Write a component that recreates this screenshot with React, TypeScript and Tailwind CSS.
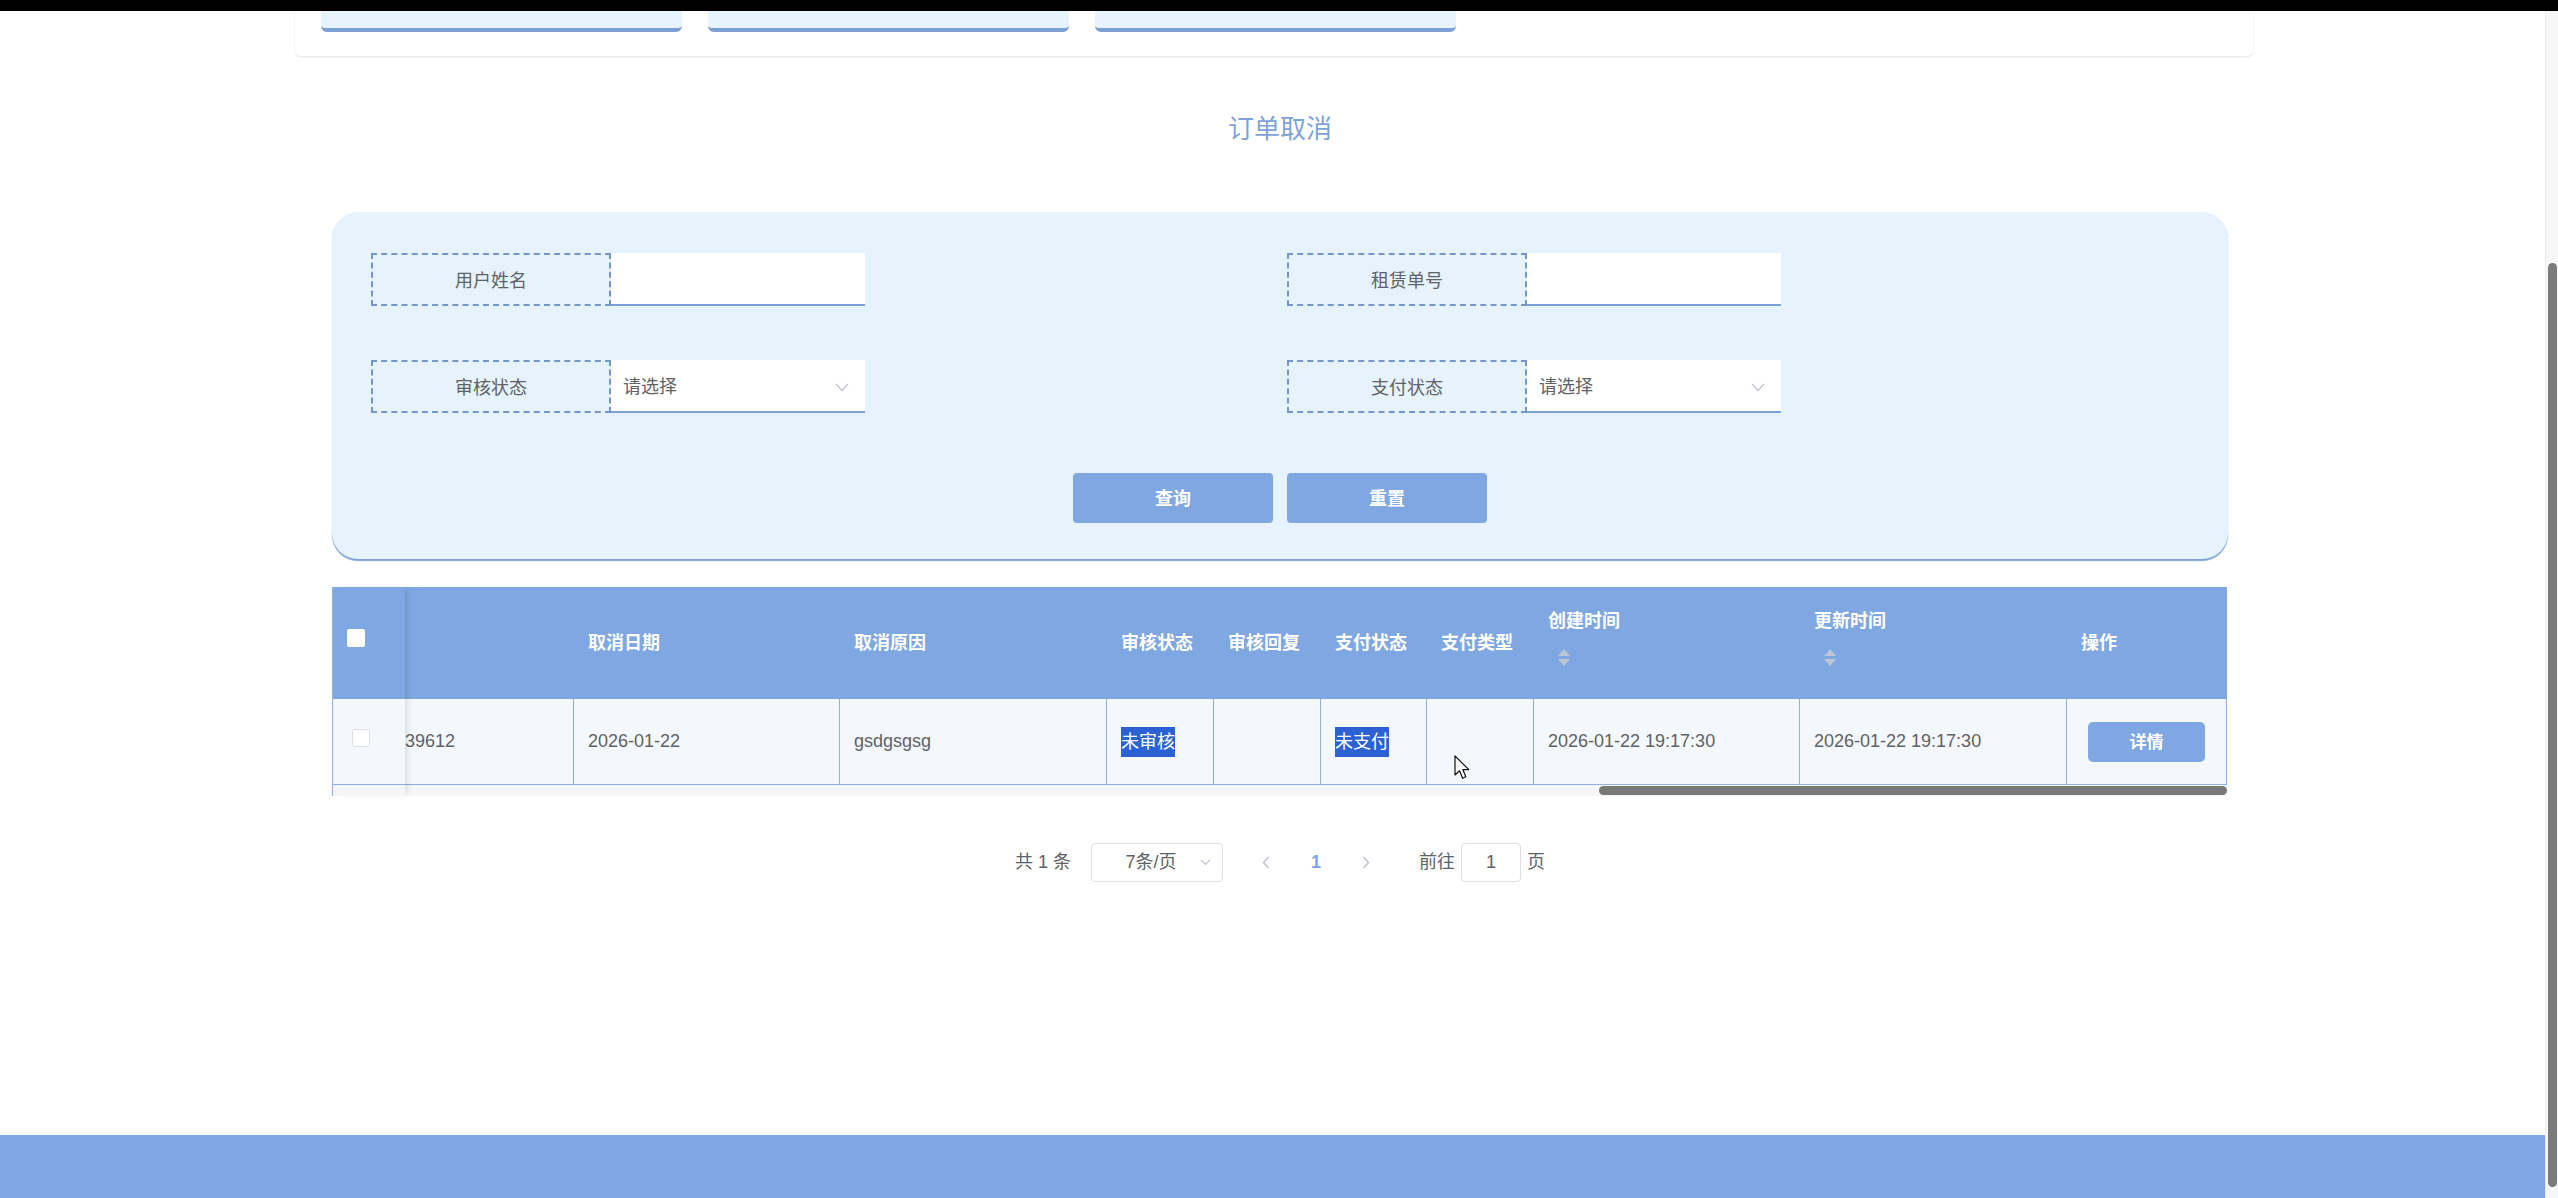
import React from "react";

function Chevron({ className }: { className?: string }) {
  return (
    <svg className={className} width="14" height="9" viewBox="0 0 14 9" fill="none">
      <polyline points="1,1 7,7.5 13,1" stroke="#c0c4cc" strokeWidth="1.3" />
    </svg>
  );
}

function Field({ label, select }: { label: string; select?: boolean }) {
  return (
    <div className="flex h-[53px]">
      <div className="w-[240px] h-full border-2 border-dashed border-[#7496cc] flex items-center justify-center pt-[4px] text-[18px] text-[#606266]">
        {label}
      </div>
      <div className="w-[254px] h-full bg-white border-b-2 border-[#7b9fd6] flex items-center pl-[12px] pr-[16px] pt-[3px] text-[18px] text-[#606266]">
        {select && (
          <>
            <span className="flex-1">请选择</span>
            <Chevron />
          </>
        )}
      </div>
    </div>
  );
}

function SortCaret() {
  return (
    <svg width="14" height="17" viewBox="0 0 14 17" className="ml-[9px] mt-[14px]">
      <path d="M7 0 L13 7 H1 Z" fill="#bcc6d8" />
      <path d="M7 17 L13 10 H1 Z" fill="#bcc6d8" />
    </svg>
  );
}

const headCls =
  "h-[112px] shrink-0 flex items-center pl-[14px] text-white font-bold text-[18px] whitespace-nowrap";
const bodyCls =
  "h-[86px] shrink-0 flex items-center border-r border-b border-[#8fb0e0] text-[18px] text-[#606266] whitespace-nowrap";

export default function App() {
  return (
    <div className="relative w-full h-[1198px] overflow-hidden bg-white flex flex-col font-['Liberation_Sans','Noto_Sans_CJK_SC',sans-serif] text-[#606266]">
      <div className="h-[11px] bg-black shrink-0" />
      <div className="flex flex-1 min-h-0">
        <main className="flex-1 flex flex-col min-w-0">
          {/* top nav container */}
          <div className="ml-[295px] w-[1958px] h-[45px] shrink-0 rounded-b-[6px] shadow-[0_1px_2px_rgba(0,0,0,0.12)] flex gap-[26px] pl-[26px]">
            <div className="w-[361px] h-[21px] bg-[#e7f3fd] rounded-b-[6px] border-b-4 border-[#7d9fd6]" />
            <div className="w-[361px] h-[21px] bg-[#e7f3fd] rounded-b-[6px] border-b-4 border-[#7d9fd6]" />
            <div className="w-[361px] h-[21px] bg-[#e7f3fd] rounded-b-[6px] border-b-4 border-[#7d9fd6]" />
          </div>

          <div className="ml-[332px] w-[1896px] flex flex-col">
            <h2 className="mt-[55px] text-center text-[26px] leading-[36px] text-[#7ea3da] font-normal">
              订单取消
            </h2>

            {/* search panel */}
            <div className="mt-[65px] h-[347px] rounded-[26px] bg-[#e6f3fd] shadow-[0_2px_1px_#7fa1d8] pt-[41px] pl-[39px]">
              <div className="grid grid-cols-[916px_1fr] gap-y-[54px]">
                <Field label="用户姓名" />
                <Field label="租赁单号" />
                <Field label="审核状态" select />
                <Field label="支付状态" select />
              </div>
              <div className="mt-[60px] flex justify-center gap-[14px] pr-[39px]">
                <button className="w-[200px] h-[50px] rounded-[4px] bg-[#7fa7e2] text-white font-bold text-[18px] pt-[3px]">
                  查询
                </button>
                <button className="w-[200px] h-[50px] rounded-[4px] bg-[#7fa7e2] text-white font-bold text-[18px] pt-[3px]">
                  重置
                </button>
              </div>
            </div>

            {/* table */}
            <div className="mt-[28px] w-[1895px] flex border-l border-[#8fb0e0]">
              <div className="w-[72px] shrink-0 z-10 shadow-[4px_0_6px_-2px_rgba(0,0,0,0.12)] flex flex-col">
                <div className="h-[112px] bg-[#7fa7e2] pl-[14px] pt-[42px]">
                  <div className="w-[18px] h-[18px] bg-white rounded-[2px]" />
                </div>
                <div className="h-[86px] bg-[#f4f7fb] border-b border-[#8fb0e0] pl-[19px] pt-[30px]">
                  <div className="w-[18px] h-[18px] bg-white border border-[#dcdfe6] rounded-[2px]" />
                </div>
                <div className="h-[11px] bg-[#f5f6f8]" />
              </div>
              <div className="flex-1 min-w-0 flex flex-col overflow-hidden">
                <div className="flex bg-[#7fa7e2]">
                  <div className={`${headCls} w-[169px]`} />
                  <div className={`${headCls} w-[266px]`}>取消日期</div>
                  <div className={`${headCls} w-[267px]`}>取消原因</div>
                  <div className={`${headCls} w-[107px]`}>审核状态</div>
                  <div className={`${headCls} w-[107px]`}>审核回复</div>
                  <div className={`${headCls} w-[106px]`}>支付状态</div>
                  <div className={`${headCls} w-[107px]`}>支付类型</div>
                  <div className={`${headCls} w-[266px]`}>
                    <div className="flex flex-col pb-[14px]">
                      <span className="leading-[28px]">创建时间</span>
                      <SortCaret />
                    </div>
                  </div>
                  <div className={`${headCls} w-[267px]`}>
                    <div className="flex flex-col pb-[14px]">
                      <span className="leading-[28px]">更新时间</span>
                      <SortCaret />
                    </div>
                  </div>
                  <div className={`${headCls} w-[160px]`}>操作</div>
                </div>
                <div className="flex bg-[#f4f7fb]">
                  <div className={`${bodyCls} w-[169px]`}>39612</div>
                  <div className={`${bodyCls} w-[266px] pl-[14px]`}>2026-01-22</div>
                  <div className={`${bodyCls} w-[267px] pl-[14px]`}>gsdgsgsg</div>
                  <div className={`${bodyCls} w-[107px] pl-[14px]`}>
                    <span className="bg-[#2b61d4] text-white leading-[30px]">未审核</span>
                  </div>
                  <div className={`${bodyCls} w-[107px] pl-[14px]`} />
                  <div className={`${bodyCls} w-[106px] pl-[14px]`}>
                    <span className="bg-[#2b61d4] text-white leading-[30px]">未支付</span>
                  </div>
                  <div className={`${bodyCls} w-[107px] pl-[14px]`} />
                  <div className={`${bodyCls} w-[266px] pl-[14px]`}>2026-01-22 19:17:30</div>
                  <div className={`${bodyCls} w-[267px] pl-[14px]`}>2026-01-22 19:17:30</div>
                  <div className={`${bodyCls} w-[160px] justify-center`}>
                    <button className="w-[117px] h-[40px] rounded-[5px] bg-[#7fa7e3] text-white font-bold text-[17px] pt-[2px]">
                      详情
                    </button>
                  </div>
                </div>
                <div className="h-[11px] bg-[#f5f6f8] flex pt-[1px]">
                  <div className="w-[1194px] shrink-0" />
                  <div className="flex-1 h-[9px] rounded-full bg-[#787878]" />
                </div>
              </div>
            </div>

            {/* pagination */}
            <div className="mt-[47px] h-[39px] flex items-center justify-center text-[18px] text-[#606266]">
              <span>共 1 条</span>
              <div className="ml-[20px] w-[132px] h-[39px] border border-[#dcdfe6] rounded-[4px] flex items-center pl-[10px] pr-[11px] bg-white">
                <span className="flex-1 text-center">7条/页</span>
                <svg width="11" height="7" viewBox="0 0 11 7" fill="none">
                  <polyline points="1,1 5.5,5.5 10,1" stroke="#c0c4cc" strokeWidth="1.2" />
                </svg>
              </div>
              <div className="ml-[18px] w-[50px] flex justify-center">
                <svg width="8" height="13" viewBox="0 0 8 13" fill="none">
                  <polyline points="6.5,1 1.5,6.5 6.5,12" stroke="#c0c4cc" strokeWidth="1.5" />
                </svg>
              </div>
              <div className="w-[50px] text-center text-[#7fa6e1] font-bold">1</div>
              <div className="w-[50px] flex justify-center">
                <svg width="8" height="13" viewBox="0 0 8 13" fill="none">
                  <polyline points="1.5,1 6.5,6.5 1.5,12" stroke="#c0c4cc" strokeWidth="1.5" />
                </svg>
              </div>
              <span className="ml-[28px]">前往</span>
              <div className="ml-[6px] w-[60px] h-[39px] border border-[#dcdfe6] rounded-[4px] flex items-center justify-center bg-white">
                1
              </div>
              <span className="ml-[6px]">页</span>
            </div>
          </div>

          <footer className="mt-auto h-[63px] shrink-0 bg-[#80a8e4]" />
        </main>

        {/* vertical scrollbar */}
        <div className="w-[13px] shrink-0 bg-[#f7f7f7] border-l border-[#ececec] pt-[252px]">
          <div className="w-[9px] h-[924px] mx-auto rounded-full bg-[#7b7b7b]" />
        </div>
      </div>

      {/* mouse cursor */}
      <svg
        className="absolute left-[1454px] top-[755px]"
        width="17"
        height="26"
        viewBox="0 0 17 26"
      >
        <path
          d="M1 1 L1 20 L5.5 15.8 L8.6 23.2 L11.8 21.8 L8.8 14.6 L14.8 14.6 Z"
          fill="#ffffff"
          stroke="#111"
          strokeWidth="1.2"
          strokeLinejoin="round"
        />
      </svg>
    </div>
  );
}
